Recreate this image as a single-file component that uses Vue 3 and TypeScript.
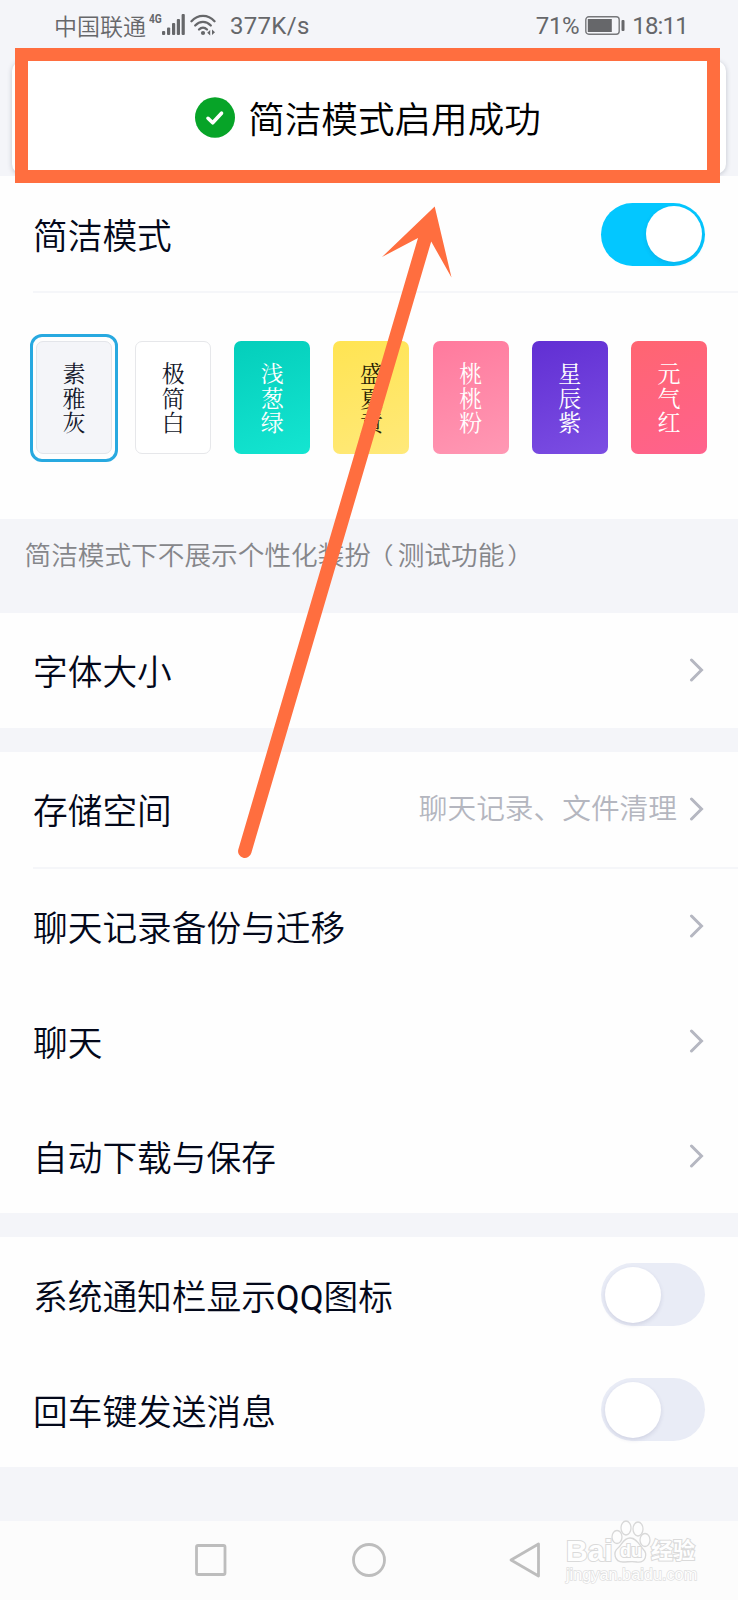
<script setup lang="ts">
interface Swatch {
  key: string
  name: string
  selected?: boolean
}

const swatches: Swatch[] = [
  { key: 'grey', name: '素雅灰', selected: true },
  { key: 'white', name: '极简白' },
  { key: 'green', name: '浅葱绿' },
  { key: 'yellow', name: '盛夏黄' },
  { key: 'pink', name: '桃桃粉' },
  { key: 'purple', name: '星辰紫' },
  { key: 'red', name: '元气红' },
]

interface LinkRow {
  label: string
  value?: string
  divided?: boolean
}

const storageRows: LinkRow[] = [
  { label: '存储空间', value: '聊天记录、文件清理', divided: true },
  { label: '聊天记录备份与迁移' },
  { label: '聊天' },
  { label: '自动下载与保存' },
]

</script>

<template>
  <div class="phone">
    <header class="top">
      <div class="status">
        <span class="carrier">中国联通</span>
        <span class="net">4G</span>
        <svg class="signal" width="23" height="21" viewBox="0 0 23 21">
          <rect x="0" y="17" width="3.2" height="4" rx="1" />
          <rect x="5" y="13.5" width="3.2" height="7.5" rx="1" />
          <rect x="10" y="9" width="3.2" height="12" rx="1" />
          <rect x="14.8" y="5" width="3.2" height="16" rx="1" />
          <rect x="19.6" y="0" width="3.2" height="21" rx="1" />
        </svg>
        <svg class="wifi" width="26" height="22" viewBox="0 0 26 22">
          <g fill="none" stroke="#66676a" stroke-width="2.3" stroke-linecap="round">
            <path d="M1.500 7.200C8 .2 18 .2 24.500 7.200" />
            <path d="M5.200 11.500c4.500-4.800 11-4.800 15.600 0" />
            <path d="M9 15.500c2.400-2.400 5.600-2.400 8 0" />
          </g>
          <circle cx="13" cy="19" r="2.1" fill="#66676a" />
          <path d="M20.200 16v5.500l-3-2.750zM22 15.500v5.500l3-2.750z" fill="#66676a" />
        </svg>
        <span class="speed">377K/s</span>
        <span class="percent">71%</span>
        <svg class="battery" width="40" height="19" viewBox="0 0 40 19">
          <rect x=".8" y=".8" width="33.4" height="17.4" rx="3" fill="none" stroke="#77787b" stroke-width="1.4" />
          <rect x="2.8" y="3" width="24" height="13" fill="#66676a" />
          <rect x="36.500" y="4" width="3" height="11" rx="1" fill="#66676a" />
        </svg>
        <span class="clock">18:11</span>
      </div>
      <div class="toast">
        <svg width="40" height="41" viewBox="0 0 40 41">
          <ellipse cx="20" cy="20.5" rx="20" ry="20.3" fill="#07a428" />
          <path d="M13 21.300l4.700 4.500 8.800-9.600" fill="none" stroke="#fff" stroke-width="3.6" stroke-linecap="round" stroke-linejoin="round" />
        </svg>
        <span>简洁模式启用成功</span>
      </div>
    </header>

    <section class="panel">
      <div class="row divided first">
        <span class="label">简洁模式</span>
        <span class="switch on"><i></i></span>
      </div>
      <div class="swatches">
        <div v-for="s in swatches" :key="s.key" class="swatch" :class="[s.key, { selected: s.selected }]">
          <span>{{ s.name }}</span>
        </div>
      </div>
    </section>

    <p class="hint">简洁模式下不展示个性化装扮<span class="open">（</span>测试功能<span class="close">）</span></p>

    <section class="panel">
      <div class="row raised">
        <span class="label">字体大小</span>
        <svg class="chevron" width="15" height="24" viewBox="0 0 15 24"><path d="M2.500 2l10 10-10 10" /></svg>
      </div>
    </section>

    <section class="panel spaced">
      <div v-for="r in storageRows" :key="r.label" class="row" :class="{ divided: r.divided }">
        <span class="label">{{ r.label }}</span>
        <span v-if="r.value" class="value">{{ r.value }}</span>
        <svg class="chevron" width="15" height="24" viewBox="0 0 15 24"><path d="M2.500 2l10 10-10 10" /></svg>
      </div>
    </section>

    <section class="panel spaced">
      <div class="row">
        <span class="label">系统通知栏显示<span class="latin">QQ</span>图标</span>
        <span class="switch"><i></i></span>
      </div>
      <div class="row">
        <span class="label">回车键发送消息</span>
        <span class="switch"><i></i></span>
      </div>
    </section>

    <nav class="nav">
      <svg width="32" height="32" viewBox="0 0 32 32"><rect x="1.5" y="1.5" width="28.5" height="29" rx="1.5" /></svg>
      <svg class="home" width="34" height="34" viewBox="0 0 34 34"><circle cx="17" cy="17" r="15.5" /></svg>
      <svg width="32" height="36" viewBox="0 0 32 36"><path d="M2 18L29.500 2v32z" /></svg>
    </nav>

    <div class="watermark">
      <div class="brand">
        <span class="bai">Bai</span>
        <span class="paw">
          <svg width="40" height="44" viewBox="0 0 40 44">
            <ellipse cx="6" cy="17" rx="5" ry="6.5" />
            <ellipse cx="15" cy="8" rx="5" ry="7" />
            <ellipse cx="27" cy="9" rx="5" ry="7" />
            <ellipse cx="34" cy="20" rx="5" ry="6.500" />
            <path d="M19 18c-7 0-8 7-12 10-5 4-4 14 5 14 5 0 9-1 14 0 9 1 11-8 6-13-4-4-6-11-13-11z" />
          </svg>
          <b>du</b>
        </span>
        <span class="cn">经验</span>
      </div>
      <div class="site">jingyan.baidu.com</div>
    </div>

    <div class="frame"></div>
    <svg class="arrow" width="738" height="900" viewBox="0 0 738 900">
      <path d="M434.700 206.500L451.500 277.500 431.200 241.500 251.300 853a6.700 6.700 0 0 1-13-3.500L418 238 382 257z" fill="#ff6e3f" />
    </svg>
  </div>
</template>

<style>
body {
  margin: 0;
}
</style>

<style scoped>
.phone {
  position: relative;
  width: 738px;
  height: 1600px;
  overflow: hidden;
  background: #f4f5f9;
  font-family: Roboto, "Noto Sans CJK SC", sans-serif;
  color: #03081a;
  display: flex;
  flex-direction: column;
}
.top {
  height: 176px;
  flex: none;
}
.status {
  height: 51px;
  margin-bottom: 10px;
  padding: 0 50px 0 54px;
  box-sizing: border-box;
  display: flex;
  align-items: center;
  color: #66676a;
  font-size: 24px;
  white-space: nowrap;
}
.carrier {
  font-size: 23px;
  font-weight: 350;
  margin-top: -2px;
}
.net {
  font-size: 12px;
  font-weight: 700;
  margin: -14px 0 0 3px;
  width: 13px;
  transform: scaleX(0.85);
  transform-origin: left;
}
.signal {
  fill: #66676a;
  margin-top: -2px;
}
.wifi {
  margin: -2px 0 0 5px;
}
.speed {
  margin-left: 14px;
  letter-spacing: 0.3px;
}
.percent {
  margin-left: auto;
  letter-spacing: -0.4px;
}
.battery {
  margin: -1px 7px 0 6px;
}
.clock {
  letter-spacing: -0.8px;
}
.toast {
  margin: 0 12px;
  height: 113px;
  border-radius: 10px;
  background: #fff;
  box-shadow: 0 1px 5px rgba(40, 50, 80, 0.25);
  display: flex;
  align-items: center;
  justify-content: center;
  gap: 13px;
  padding-right: 2px;
  box-sizing: border-box;
  color: #000;
  font-size: 36.6px;
  font-weight: 350;
}
.panel {
  background: #fefefe;
  flex: none;
}
.spaced {
  margin-top: 24px;
}
.row {
  position: relative;
  height: 115px;
  box-sizing: border-box;
  padding: 0 34px 0 33px;
  display: flex;
  align-items: center;
}
.row.raised {
  height: 115.3px;
  padding-bottom: 2px;
}
.row.divided {
  height: 116px;
  padding-bottom: 2px;
}
.row.first {
  padding-bottom: 0;
}
.divided::after {
  content: "";
  position: absolute;
  left: 33px;
  right: 0;
  bottom: -1px;
  height: 2px;
  background: #f5f6f9;
}
.label {
  font-size: 34.7px;
  font-weight: 350;
  margin-right: auto;
  white-space: nowrap;
}
.latin {
  font-weight: 400;
}
.value {
  font-size: 28.7px;
  line-height: 40px;
  font-weight: 350;
  color: #b4b6bf;
  margin: 0 12px 0 0;
}
.chevron {
  fill: none;
  stroke: #b5b7c1;
  stroke-width: 3;
  stroke-linecap: round;
}
.switch {
  width: 104px;
  height: 63px;
  margin-right: -1px;
  border-radius: 32px;
  background: #e9ecf6;
  box-sizing: border-box;
  padding: 3.5px;
  display: flex;
}
.switch i {
  width: 56px;
  height: 56px;
  border-radius: 50%;
  background: #fff;
  box-shadow: 0 2px 4px rgba(60, 60, 110, 0.14);
}
.switch.on {
  background: #03c7ff;
  justify-content: flex-end;
}
.swatches {
  display: flex;
  justify-content: space-between;
  height: 227px;
  padding: 49px 31px 0 36px;
  box-sizing: border-box;
}
.swatch {
  position: relative;
  width: 76px;
  height: 113px;
  border-radius: 7px;
  box-sizing: border-box;
  display: flex;
  align-items: center;
  justify-content: center;
  font-family: "Noto Serif CJK SC", "Noto Sans CJK SC", serif;
  font-size: 23px;
  font-weight: 400;
  line-height: 24px;
  color: #fff;
}
.swatch span {
  writing-mode: vertical-rl;
  letter-spacing: 1.4px;
  margin: 2px 1px 0 0;
}
.swatch.selected::before {
  content: "";
  position: absolute;
  inset: -8px -7px -9px;
  border: 3px solid #28a9e0;
  border-radius: 12px;
}
.grey {
  background: #f4f5f9;
  border: 1px solid #e3e5ea;
  color: #12162a;
}
.white {
  background: #fff;
  border: 1px solid #e6e7ea;
  color: #12162a;
}
.green {
  background: linear-gradient(160deg, #04cebb, #14e5d1);
}
.yellow {
  background: linear-gradient(160deg, #ffe452, #ffe97a);
  color: #2a2205;
}
.pink {
  background: linear-gradient(160deg, #ff7a9d, #ff98b4);
}
.purple {
  background: linear-gradient(160deg, #612fd3, #7c4ee3);
}
.red {
  background: linear-gradient(160deg, #ff6571, #ff628d);
}
.hint {
  margin: 0;
  height: 94px;
  flex: none;
  box-sizing: border-box;
  padding: 17px 0 0 24.5px;
  font-size: 26.67px;
  line-height: 40px;
  font-weight: 350;
  color: #85868a;
  white-space: nowrap;
}
.open,
.close {
  display: inline-block;
}
.open {
  transform: translateX(-4px) scaleY(0.88);
}
.close {
  transform: translateX(3px) scaleY(0.88);
}
.nav {
  margin-top: auto;
  height: 79px;
  flex: none;
  background: #fcfcfc;
  box-sizing: border-box;
  padding: 0 197px 1px 195px;
  display: flex;
  align-items: center;
  justify-content: space-between;
  fill: none;
  stroke: #bdbdbd;
  stroke-width: 2.8;
  stroke-linejoin: round;
}
.home {
  margin-left: 2px;
}
.watermark {
  position: absolute;
  left: 566px;
  top: 1520px;
  width: 135px;
  font-family: "Liberation Sans", "Noto Sans CJK SC", sans-serif;
  color: #fefefe;
  -webkit-text-stroke: 2px #dadada;
  paint-order: stroke fill;
}
.brand {
  display: flex;
  align-items: flex-end;
  height: 44px;
}
.bai {
  font-size: 30px;
  line-height: 27px;
  font-weight: 700;
  width: 45px;
}
.paw {
  position: relative;
  width: 40px;
  height: 44px;
}
.paw svg {
  display: block;
  fill: #fdfdfd;
  stroke: #d8d8d8;
  stroke-width: 1.3;
  paint-order: normal;
}
.paw b {
  position: absolute;
  left: 9px;
  top: 20px;
  font-size: 18px;
  line-height: 22px;
}
.cn {
  font-size: 22px;
  line-height: 26px;
  font-weight: 700;
}
.site {
  font-size: 16.3px;
  line-height: 20px;
  -webkit-text-stroke: 1.4px #dfdfdf;
}
.frame {
  position: absolute;
  left: 15px;
  top: 48px;
  width: 705px;
  height: 135px;
  box-sizing: border-box;
  border: 13.5px solid #ff6e3f;
}
.arrow {
  position: absolute;
  left: 0;
  top: 0;
  pointer-events: none;
}
</style>
